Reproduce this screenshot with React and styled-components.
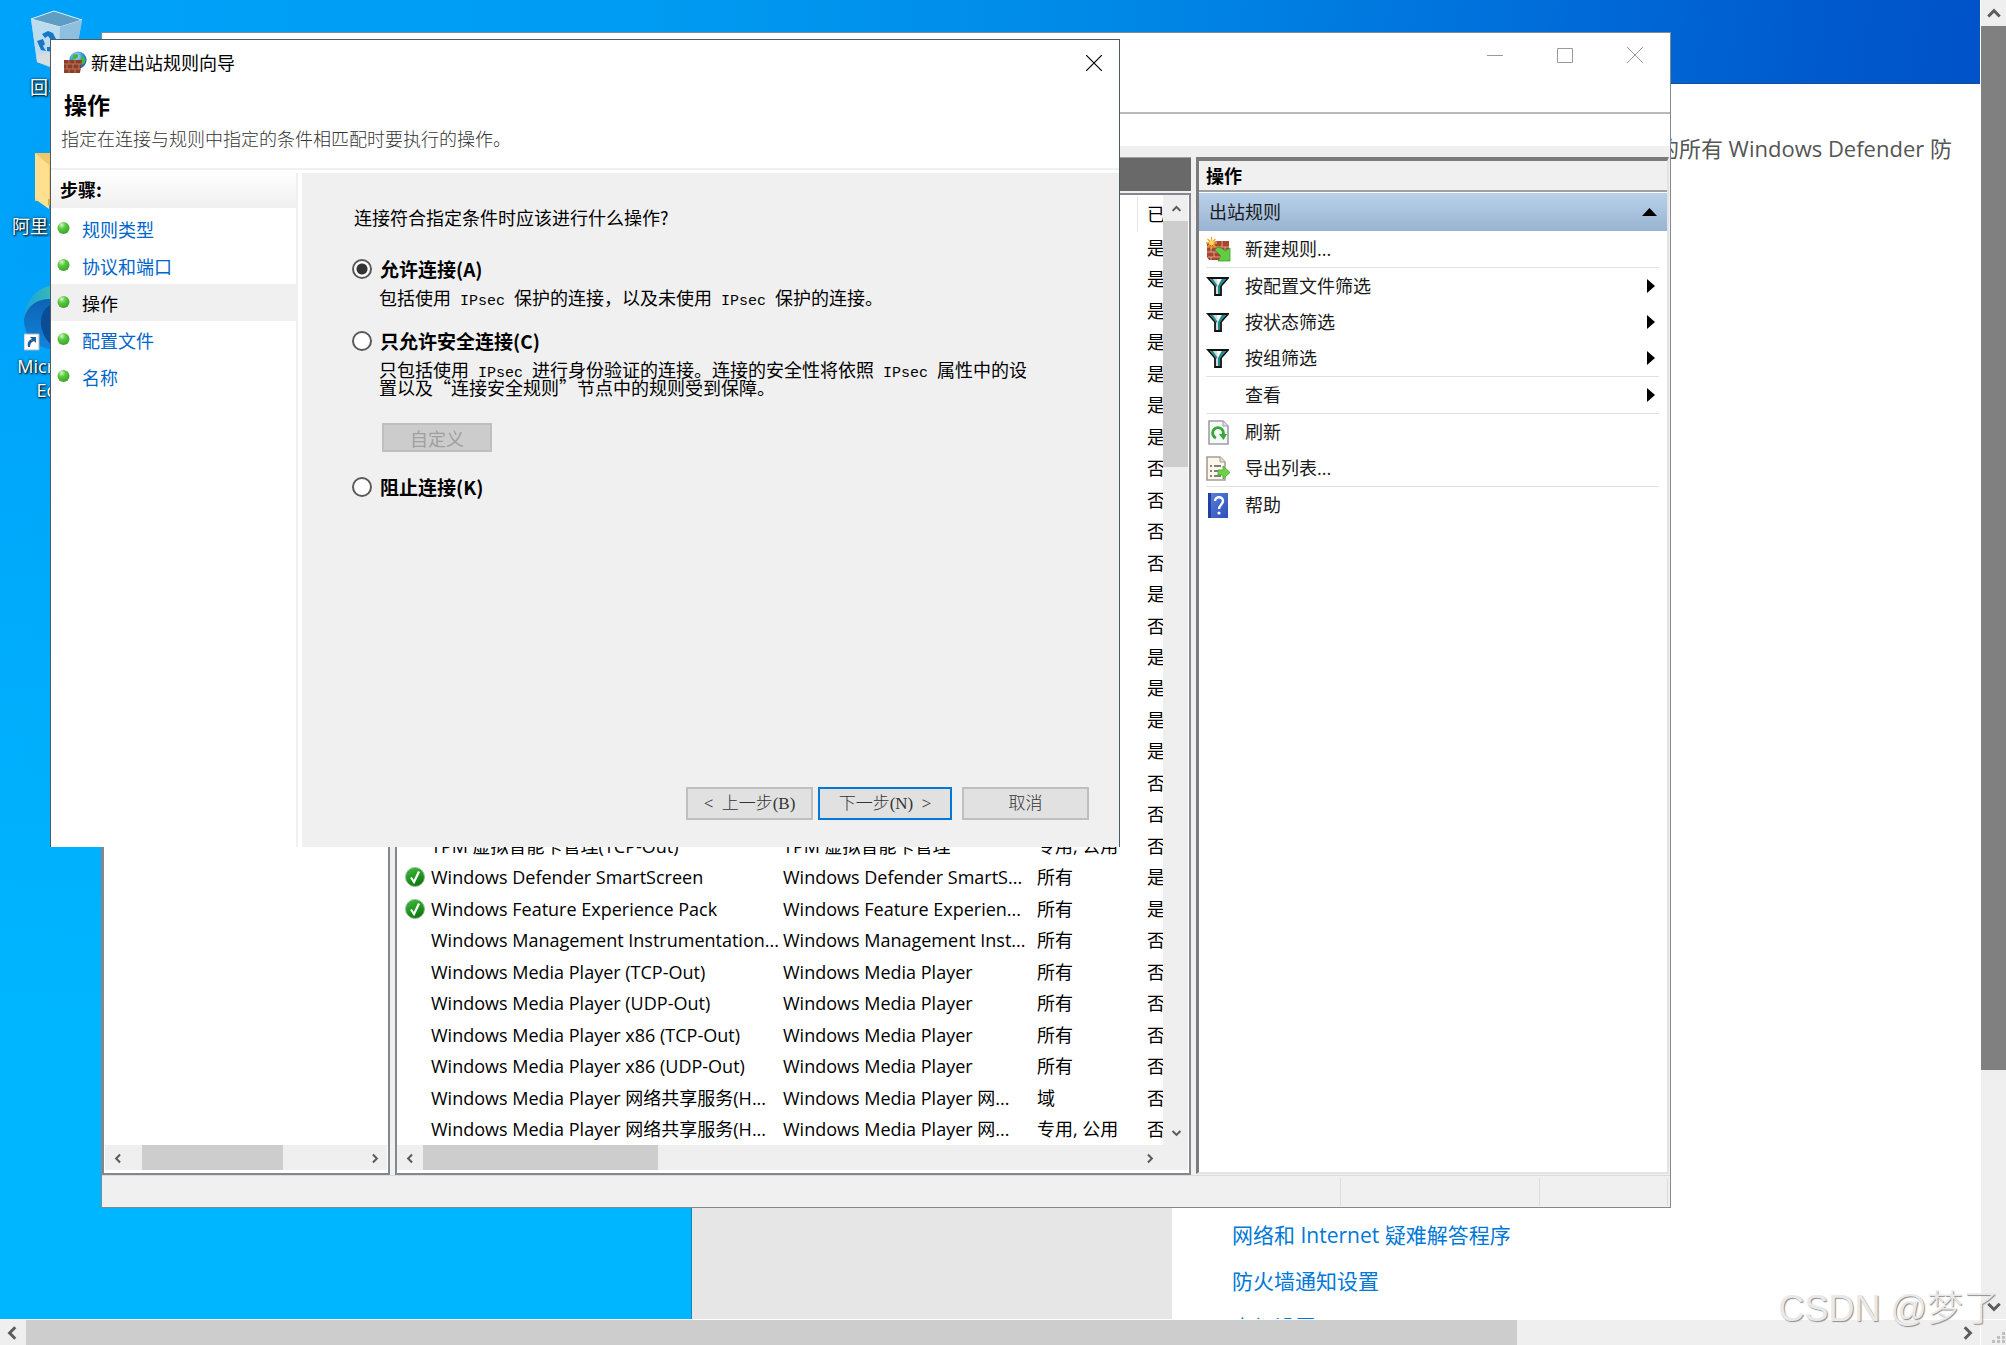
import { useState } from "react";
import styled, { createGlobalStyle, css } from "styled-components";

const uiFont = `"Open Sans", "Noto Sans CJK SC", sans-serif`;
const cjkFont = `"Noto Sans CJK SC", "Noto Sans", sans-serif`;

const GlobalStyle = createGlobalStyle`
  * { box-sizing: border-box; }
  body { margin: 0; overflow: hidden; font-family: ${uiFont}; font-size: 18px; line-height: 24px; color: #1a1a1a; }
  button { font: inherit; color: inherit; border: 0; padding: 0; background: none; }
  a { text-decoration: none; }
  h1, h2, p, ul { margin: 0; padding: 0; font-size: inherit; font-weight: inherit; }
  ul { list-style: none; }
  svg { display: block; flex: none; }
`;

const Screen = styled.div`
  position: relative;
  display: grid;
  grid-template: minmax(0, 1fr) 25px / minmax(0, 1fr) 25px;
  gap: 1px;
  height: 100vh;
  background: #ffffff;
`;

const Desktop = styled.main`
  position: relative;
  overflow: hidden;
  background:
    linear-gradient(180deg, rgba(0, 184, 255, 0) 0%, rgba(0, 184, 255, 0) 20%, #00b7ff 80%),
    linear-gradient(98deg, #00a3fa 0%, #009bf2 30%, #0088e6 52%, #0072dc 68%, #0058cc 86%, #004ac4 100%);
`;

/* ---------- scroll bars ---------- */

const Bar = styled.div`
  display: flex;
  flex-direction: ${(p) => (p.$vertical ? "column" : "row")};
  background: #efefef;
  ${(p) => (p.$vertical ? css`width: 25px;` : css`height: 25px;`)}
`;

const ArrowButton = styled.button`
  display: flex;
  align-items: center;
  justify-content: center;
  flex: none;
  width: 26px;
  height: 26px;
`;

const Track = styled.div`
  display: flex;
  flex: 1;
  min-width: 0;
  min-height: 0;
  flex-direction: ${(p) => (p.$vertical ? "column" : "row")};
  padding-left: ${(p) => p.$start || 0}px;
`;

const Thumb = styled.div`
  flex: 0 0 ${(p) => p.$size};
  background: ${(p) => (p.$dark ? "#808080" : "#cdcdcd")};
`;

const chevrons = {
  up: "M2 10 L7 5 L12 10",
  down: "M2 5 L7 10 L12 5",
  left: "M9 2 L4 7 L9 12",
  right: "M5 2 L10 7 L5 12",
};

const Chevron = ({ dir, size = 12 }) => (
  <svg width={size} height={size} viewBox="0 0 14 14">
    <path d={chevrons[dir]} fill="none" stroke="#5c5c5c" strokeWidth="2.6" />
  </svg>
);

const ScrollBar = ({ vertical, thumb, start, dark, icon }) => (
  <Bar $vertical={vertical}>
    <ArrowButton type="button" aria-label={vertical ? "向上" : "向左"}>
      <Chevron dir={vertical ? "up" : "left"} size={icon} />
    </ArrowButton>
    <Track $vertical={vertical} $start={start}>
      <Thumb $size={thumb} $dark={dark} />
    </Track>
    <ArrowButton type="button" aria-label={vertical ? "向下" : "向右"}>
      <Chevron dir={vertical ? "down" : "right"} size={icon} />
    </ArrowButton>
  </Bar>
);

const Grip = styled.div`
  display: flex;
  align-items: flex-end;
  justify-content: flex-end;
  background: #efefef;
`;

/* ---------- desktop shortcuts ---------- */

const Shortcut = styled.div`
  position: absolute;
  left: 0;
  top: ${(p) => p.$top}px;
  width: 114px;
  display: flex;
  flex-direction: column;
  align-items: center;
  gap: 3px;
  color: #ffffff;
  text-align: center;
  text-shadow: 1px 1px 2px #000000, 0 0 3px rgba(0, 0, 0, 0.7);
`;

const WideLabel = styled.span`
  align-self: flex-start;
  padding-left: 12px;
`;

const BinIcon = () => (
  <svg width="54" height="62" viewBox="0 0 54 62">
    <path d="M1 9 L24 1 L52 10 L44 55 L24 59 L7 52 Z" fill="#9fcbe6" />
    <path d="M1 9 L24 1 L52 10 L30 17 Z" fill="#5e9dc4" stroke="#d7edf8" strokeWidth="1" />
    <path d="M1 9 L30 17 L29 59 L7 52 Z" fill="#bddcf0" />
    <path d="M30 17 L52 10 L44 55 L29 59 Z" fill="#8fbfdf" />
    <path d="M7 45 L20 42 L29 48 L29 59 L7 52 Z" fill="#d9dde0" />
    <path d="M12 24 l6 -3 5 2 3 6 -5 1 -3 -4 -3 2z M7 31 l6 -2 2 5 -2 2 3 5 -5 -1z M17 41 v-4 l5 0 3 -4 2 4 -4 5z" fill="#1677c7" />
  </svg>
);

const FolderIcon = () => (
  <svg width="44" height="58" viewBox="0 0 44 58">
    <path d="M0 0 H30 L44 10 V48 H0 Z" fill="#f0c869" />
    <path d="M0 0 L14 12 V56 L0 46 Z" fill="#ffe08f" />
    <path d="M13 46 h14 v6 h-14z" fill="#e0ad3f" />
  </svg>
);

const EdgeIcon = () => (
  <svg width="66" height="66" viewBox="0 0 66 66">
    <defs>
      <linearGradient id="edgeTop" x1="0" y1="0" x2="1" y2="0">
        <stop offset="0" stopColor="#1ba2de" />
        <stop offset="1" stopColor="#5fd87a" />
      </linearGradient>
      <linearGradient id="edgeBody" x1="0" y1="0" x2="0" y2="1">
        <stop offset="0" stopColor="#0c63b4" />
        <stop offset="1" stopColor="#1285dc" />
      </linearGradient>
    </defs>
    <path d="M0 34 C2 10 18 0 34 0 C52 0 66 14 66 30 C66 20 30 4 0 34Z" fill="url(#edgeTop)" />
    <path d="M0 34 C4 18 16 14 26 14 C38 14 46 22 46 30 H34 C26 32 26 48 42 60 C30 70 0 62 0 34Z" fill="url(#edgeBody)" />
    <path d="M26 20 C12 28 14 54 34 64 L48 58 C34 54 26 42 30 30Z" fill="#0b4d95" />
    <path d="M0 49 h15 v16 h-15z" fill="#ffffff" stroke="#a9b8c4" />
    <path d="M4 62 C3 57 5 55 8 54 L6 52 H12 V58 L10 56 C7 57 6 59 6 62Z" fill="#1f5f9f" />
  </svg>
);

/* ---------- settings window ---------- */

const SettingsWindow = styled.section`
  position: absolute;
  inset: 83px 0 0 691px;
  display: grid;
  grid-template-columns: 480px 1fr;
  border-top: 1px solid #1b4f8c;
  border-left: 1px solid #1583bd;
  background: #ffffff;
  font-size: 21px;
  line-height: 30px;
`;

const SettingsNav = styled.div`
  background: #e6e6e6;
`;

const SettingsBody = styled.div`
  display: flex;
  flex-direction: column;
  justify-content: space-between;
  overflow: hidden;
  padding: 49px 28px 0 60px;
`;

const SettingsNote = styled.p`
  align-self: flex-end;
  color: #555555;
  font-size: 22px;
  white-space: nowrap;
`;

const SettingsLinks = styled.nav`
  display: flex;
  flex-direction: column;
  gap: 16px;
  margin-bottom: -23px;

  a { color: #0078d7; }
`;

/* ---------- console window ---------- */

const ConsoleWindow = styled.section`
  position: absolute;
  inset: 32px 309px 111px 101px;
  display: flex;
  flex-direction: column;
  border: 1px solid #7f8a92;
  background: #f0f0f0;
`;

const ConsoleTitle = styled.header`
  display: flex;
  justify-content: flex-end;
  align-items: flex-start;
  flex: none;
  height: 79px;
  background: #ffffff;
`;

const CaptionButton = styled.button`
  display: flex;
  align-items: center;
  justify-content: center;
  width: 70px;
  height: 44px;
`;

const ToolStrip = styled.div`
  flex: none;
  height: 34px;
  border-top: 2px solid #b9b9bd;
  background: #ffffff;
`;

const Panes = styled.div`
  display: grid;
  grid-template-columns: 288px minmax(0, 1fr) 473px;
  gap: 5px;
  flex: 1;
  min-height: 0;
  padding: 11px 1px 0 0;
`;

const TreePane = styled.div`
  display: flex;
  flex-direction: column;
  justify-content: flex-end;
  border: 2px solid #828790;
  background: #ffffff;
  padding: 0 1px 3px;
`;

const ListPane = styled.div`
  display: flex;
  flex-direction: column;
  min-height: 0;
`;

const ListCaption = styled.div`
  flex: none;
  height: 34px;
  margin-bottom: 2px;
  border-top: 1px solid #a0a0a0;
  background: #696969;
`;

const ListBox = styled.div`
  display: flex;
  flex-direction: column;
  flex: 1;
  min-height: 0;
  border: 2px solid #828790;
  background: #ffffff;
  padding: 0 1px 3px 0;
`;

const ListBody = styled.div`
  display: flex;
  flex: 1;
  min-height: 0;
`;

const BarRow = styled.div`
  display: flex;
  flex: none;
  background: #efefef;

  > :first-child { flex: 1; }
`;

const Corner = styled.div`
  width: 26px;
`;

const RuleTable = styled.table`
  display: flex;
  flex-direction: column;
  flex: 1;
  min-width: 0;
  overflow: hidden;
  color: #000000;

  thead { flex: none; padding-top: 1px; }
  tbody { flex: 1; display: grid; grid-auto-rows: 1fr; }
  tr { display: grid; grid-template-columns: 383px 250px 107px 1fr; }
  thead tr { height: 36px; }
`;

const Head = styled.th`
  display: flex;
  align-items: center;
  padding: 0 0 0 9px;
  border-left: 1px solid #e5e5e5;
  font-weight: 400;
  overflow: hidden;
`;

const Cell = styled.td`
  display: flex;
  align-items: center;
  gap: 6px;
  min-width: 0;
  padding: 0 0 0 ${(p) => p.$pad}px;
  white-space: nowrap;
  overflow: hidden;
`;

const IconSlot = styled.span`
  flex: none;
  width: 20px;
`;

const CheckIcon = () => (
  <svg width="20" height="20" viewBox="0 0 20 20">
    <defs>
      <linearGradient id="tick" x1="0" y1="0" x2="0.4" y2="1">
        <stop offset="0" stopColor="#3fbf3a" />
        <stop offset="1" stopColor="#0e7a12" />
      </linearGradient>
    </defs>
    <circle cx="10" cy="10" r="9.5" fill="url(#tick)" stroke="#9bb79b" />
    <path d="M6 10.5 L9 15 L14 4.5" fill="none" stroke="#ffffff" strokeWidth="2.2" />
  </svg>
);

const ActionsPane = styled.aside`
  display: flex;
  flex-direction: column;
  min-height: 0;
  border-top: 4px solid #7b7b7b;
  border-left: 3px solid #7b7b7b;
  border-right: 2px solid #e3e3e3;
  border-bottom: 2px solid #e3e3e3;
  margin-bottom: 1px;
  background: #ffffff;
`;

const ActionsHead = styled.h2`
  flex: none;
  height: 31px;
  padding: 3px 7px;
  border-bottom: 2px solid #a0a0a0;
  background: #f0f0f0;
  color: #000000;
  font-weight: 700;
`;

const GroupHead = styled.button`
  display: flex;
  align-items: center;
  justify-content: space-between;
  flex: none;
  height: 38px;
  margin-top: 1px;
  padding: 0 10px 0 10px;
  background: linear-gradient(#b9d1ea, #99b4d1);
`;

const ActionList = styled.ul`
  padding: 0 8px 0 7px;
`;

const ActionItem = styled.li`
  border-bottom: ${(p) => (p.$line ? "1px solid #e2e2e2" : "0")};

  button {
    display: flex;
    align-items: center;
    width: 100%;
    height: 36px;
    padding-right: 4px;
    text-align: left;
  }

  span { flex: 1; }
`;

const ActionIcon = styled.i`
  flex: none;
  width: 39px;
`;

const StatusBar = styled.footer`
  display: flex;
  justify-content: flex-end;
  flex: none;
  height: 32px;
  padding: 2px 2px 1px 0;
  border-top: 1px solid #dcdcdc;
`;

const StatusCell = styled.div`
  width: ${(p) => p.$width}px;
  border-left: 1px solid #dcdcdc;
`;

const NewRuleIcon = () => (
  <svg width="25" height="25" viewBox="0 0 25 25">
    <path d="M1 6 L12 4 H23 V20 L20 23 H3 L1 20Z" fill="#a8452f" />
    <path d="M1 10 H23 M1 15 H23 M2 20 H22 M8 5 V10 M16 4 V10 M5 10 V15 M12 10 V15 M19 10 V15 M8 15 V20 M15 15 V20 M5 20 V23" stroke="#dba58d" strokeWidth="1" />
    <path d="M9 13 C11 9 15 10 19 14 L24 11 V24 H12 L15 19 Z" fill="#62cc42" stroke="#3d9c2c" strokeWidth="0.8" />
    <path d="M5.5 0 V12 M0 6 H11 M1.5 2 L9.5 10 M9.5 2 L1.5 10" stroke="#f6a31c" strokeWidth="1.3" />
    <circle cx="5.5" cy="6" r="2.4" fill="#ffd75a" />
  </svg>
);

const FunnelIcon = () => (
  <svg width="23" height="19" viewBox="0 0 23 19">
    <path d="M2 1 H22 L15 9 V18 H9 V9 Z" fill="#d6dadb" stroke="#111111" strokeWidth="1.8" />
    <path d="M16 2 H20 L14 9 V17 H12 V9Z" fill="#158c8c" />
    <path d="M4 2 H7 L11 8 V10Z" fill="#158c8c" />
    <path d="M11 2 H15 L12 8Z" fill="#ffffff" />
  </svg>
);

const RefreshIcon = () => (
  <svg width="23" height="25" viewBox="0 0 23 25">
    <path d="M3 1 H17 L22 6 V24 H3Z" fill="#f7f8f8" stroke="#9aa0a3" strokeWidth="1.6" />
    <path d="M17 1 V6 H22" fill="#dddddd" stroke="#9aa0a3" />
    <path d="M10 18 A5.4 5.4 0 1 1 17 15" fill="none" stroke="#35a935" strokeWidth="2.8" />
    <path d="M13 14 H21 L17.5 20Z" fill="#35a935" />
  </svg>
);

const ExportIcon = () => (
  <svg width="25" height="25" viewBox="0 0 25 25">
    <path d="M1 1 H14 L19 6 V24 H1Z" fill="#fbf7ea" stroke="#a39f92" strokeWidth="1.6" />
    <path d="M14 1 V6 H19" fill="#e4dfd0" stroke="#a39f92" />
    <path d="M4 10 H6 M4 15 H6 M4 20 H6 M8 10 H15 M8 15 H13 M8 20 H15" stroke="#55595c" strokeWidth="1.4" />
    <path d="M12 14 H17 V10 L24 16.5 L17 23 V19 H12Z" fill="#6fd04a" stroke="#49a52e" strokeWidth="0.8" />
  </svg>
);

const HelpIcon = () => (
  <svg width="22" height="25" viewBox="0 0 22 25">
    <defs>
      <linearGradient id="book" x1="0" y1="0" x2="1" y2="1">
        <stop offset="0" stopColor="#5b82e0" />
        <stop offset="1" stopColor="#2c4fb8" />
      </linearGradient>
    </defs>
    <path d="M2 0 H22 V25 H2Z" fill="url(#book)" />
    <path d="M2 0 H5 V25 H2Z" fill="#2140a0" />
    <path d="M9 8 C9 3 17 3 17 8 C17 11.5 13 12 13 16" fill="none" stroke="#ffffff" strokeWidth="2.4" />
    <circle cx="13" cy="20" r="1.6" fill="#ffffff" />
  </svg>
);

const RightTriangle = () => (
  <svg width="8" height="14" viewBox="0 0 8 14">
    <path d="M0 0 L8 7 L0 14Z" fill="#000000" />
  </svg>
);

/* ---------- wizard ---------- */

const Wizard = styled.form`
  position: absolute;
  left: 50px;
  top: 39px;
  width: 1070px;
  height: 808px;
  display: flex;
  flex-direction: column;
  border: 1px solid #4d5a63;
  border-bottom: 0;
  background: #ffffff;
  color: #000000;
  font-family: ${cjkFont};
`;

const WizardTitle = styled.header`
  display: flex;
  align-items: center;
  flex: none;
  height: 44px;
  padding-left: 13px;
  gap: 4px;

  h1 { flex: 1; }
`;

const CloseButton = styled.button`
  display: flex;
  align-items: center;
  justify-content: center;
  width: 50px;
  height: 44px;
  padding-top: 2px;
`;

const WizardIntro = styled.div`
  flex: none;
  height: 86px;
  padding: 6px 10px 0;
  border-bottom: 2px solid #f0f0f0;

  h2 {
    padding-left: 3px;
    font-size: 23px;
    line-height: 28px;
    font-weight: 700;
  }

  p {
    margin-top: 8px;
    color: #333333;
    font-weight: 300;
  }
`;

const WizardBody = styled.div`
  display: grid;
  grid-template-columns: 247px 1fr;
  gap: 4px;
  flex: 1;
  min-height: 0;
  padding-top: 3px;
`;

const Steps = styled.nav`
  border-right: 2px solid #f0f0f0;
`;

const StepsHead = styled.h2`
  height: 35px;
  margin-bottom: 2px;
  padding: 4px 9px;
  background: linear-gradient(#ffffff, #efefef);
  font-weight: 700;
`;

const Step = styled.a`
  display: flex;
  align-items: center;
  gap: 12px;
  height: 37px;
  padding-left: 6px;
  background: ${(p) => (p.$current ? "#f0f0f0" : "transparent")};
  color: ${(p) => (p.$current ? "#000000" : "#0066cc")};
`;

const StepDot = () => (
  <svg width="13" height="13" viewBox="0 0 13 13">
    <defs>
      <radialGradient id="dot" cx="0.35" cy="0.25" r="0.8">
        <stop offset="0" stopColor="#d9f5cf" />
        <stop offset="0.4" stopColor="#57cd3c" />
        <stop offset="1" stopColor="#3f9c33" />
      </radialGradient>
    </defs>
    <circle cx="6.5" cy="6" r="6" fill="url(#dot)" />
  </svg>
);

const Question = styled.div`
  display: flex;
  flex-direction: column;
  gap: 23px;
  background: #f0f0f0;
  padding: 32px 30px 27px 50px;
`;

const Prompt = styled.p`
  padding: 0 0 5px 2px;
`;

const Option = styled.div``;

const OptionLabel = styled.label`
  display: flex;
  align-items: center;
  gap: 8px;
  font-size: 19px;
  font-weight: 700;
`;

const Radio = styled.input`
  appearance: none;
  flex: none;
  width: 20px;
  height: 20px;
  margin: 0;
  border: 2px solid #5a5a5a;
  border-radius: 50%;
  background: #ffffff;

  &:checked {
    background: radial-gradient(circle, #333333 5px, #ffffff 6px);
  }
`;

const Detail = styled.p`
  max-width: 652px;
  margin: 7px 0 0 27px;
  line-height: 18px;
`;

const Half = styled.span`
  font-family: "Liberation Mono", monospace;
  font-size: 15px;
  line-height: 0;
`;

const CustomButton = styled.button`
  width: 110px;
  height: 29px;
  margin: 27px 0 0 30px;
  border: 2px solid #bfbfbf;
  background: #cccccc;
  color: #a0a0a0;
  line-height: 22px;
  display: block;
`;

const WizardButtons = styled.div`
  display: flex;
  justify-content: flex-end;
  gap: 5px;
  margin-top: auto;
`;

const WizardButton = styled.button`
  width: ${(p) => (p.$primary ? 134 : 127)}px;
  height: 33px;
  margin-left: ${(p) => (p.$apart ? 5 : 0)}px;
  border: 2px solid ${(p) => (p.$primary ? "#0078d7" : "#bfbfbf")};
  background: #e1e1e1;
  color: #333333;
  font-family: "Liberation Serif", ${cjkFont};
  font-size: 17px;
  font-weight: 300;
  white-space: pre;
`;

const FirewallIcon = () => (
  <svg width="23" height="23" viewBox="0 0 23 23">
    <defs>
      <radialGradient id="globe" cx="0.4" cy="0.3" r="0.8">
        <stop offset="0" stopColor="#bfe6ff" />
        <stop offset="0.5" stopColor="#2f8fe0" />
        <stop offset="1" stopColor="#174fa8" />
      </radialGradient>
    </defs>
    <circle cx="14" cy="9" r="8.6" fill="url(#globe)" />
    <path d="M9 4 C12 2 15 3 14 6 C12 9 10 8 8 9Z M17 4 L21 7 L21 12 L17 14 C15 11 18 8 17 4Z" fill="#48b53a" />
    <path d="M0 9 H18 L16 22 H0Z" fill="#8d3d28" />
    <path d="M0 13 H17 M0 18 H17 M5 9 V13 M11 9 V13 M3 13 V18 M9 13 V18 M15 13 V18 M5 18 V22 M11 18 V22" stroke="#b8765e" strokeWidth="1" />
  </svg>
);

const Watermark = styled.div`
  position: absolute;
  right: 7px;
  bottom: 12px;
  color: #e9e9e9;
  font-family: "Liberation Sans", "Noto Sans CJK SC", sans-serif;
  font-size: 36px;
  font-weight: 300;
  line-height: 48px;
  text-shadow: 1px 1px 1px #8c8c8c;
  pointer-events: none;
`;

const enabled = "是是是是是是是否否否否是否是是是是否否否是是否否否否否否否".split("");

const named = {
  19: ["TPM 虚拟智能卡管理(TCP-Out)", "TPM 虚拟智能卡管理", "专用, 公用"],
  20: ["Windows Defender SmartScreen", "Windows Defender SmartS...", "所有"],
  21: ["Windows Feature Experience Pack", "Windows Feature Experien...", "所有"],
  22: ["Windows Management Instrumentation...", "Windows Management Inst...", "所有"],
  23: ["Windows Media Player (TCP-Out)", "Windows Media Player", "所有"],
  24: ["Windows Media Player (UDP-Out)", "Windows Media Player", "所有"],
  25: ["Windows Media Player x86 (TCP-Out)", "Windows Media Player", "所有"],
  26: ["Windows Media Player x86 (UDP-Out)", "Windows Media Player", "所有"],
  27: ["Windows Media Player 网络共享服务(H...", "Windows Media Player 网...", "域"],
  28: ["Windows Media Player 网络共享服务(H...", "Windows Media Player 网...", "专用, 公用"],
};

const rules = enabled.map((on, i) => {
  const [name = "", group = "", profile = ""] = named[i] || [];
  return { name, group, profile, on, ticked: Boolean(name) && on === "是" };
});

const actions = [
  { label: "新建规则...", icon: <NewRuleIcon />, line: true },
  { label: "按配置文件筛选", icon: <FunnelIcon />, sub: true },
  { label: "按状态筛选", icon: <FunnelIcon />, sub: true },
  { label: "按组筛选", icon: <FunnelIcon />, sub: true, line: true },
  { label: "查看", sub: true, line: true },
  { label: "刷新", icon: <RefreshIcon /> },
  { label: "导出列表...", icon: <ExportIcon />, line: true },
  { label: "帮助", icon: <HelpIcon /> },
];

const steps = ["规则类型", "协议和端口", "操作", "配置文件", "名称"];

const RulesConsole = () => (
  <ConsoleWindow>
    <ConsoleTitle>
      <CaptionButton type="button" aria-label="最小化">
        <svg width="16" height="16" viewBox="0 0 16 16"><path d="M0 8.5 H16" stroke="#999999" /></svg>
      </CaptionButton>
      <CaptionButton type="button" aria-label="最大化">
        <svg width="16" height="16" viewBox="0 0 16 16"><path d="M0.5 1.5 H15.5 V15.5 H0.5Z" fill="none" stroke="#999999" /></svg>
      </CaptionButton>
      <CaptionButton type="button" aria-label="关闭">
        <svg width="16" height="16" viewBox="0 0 16 16"><path d="M0 0 L16 16 M16 0 L0 16" stroke="#999999" /></svg>
      </CaptionButton>
    </ConsoleTitle>
    <ToolStrip />
    <Panes>
      <TreePane>
        <ScrollBar thumb="141px" start={11} icon={11} />
      </TreePane>
      <ListPane>
        <ListCaption />
        <ListBox>
          <ListBody>
            <RuleTable>
              <thead>
                <tr>
                  <td /><td /><td />
                  <Head>已</Head>
                </tr>
              </thead>
              <tbody>
                {rules.map((r, i) => (
                  <tr key={i}>
                    <Cell $pad={8}>
                      <IconSlot>{r.ticked && <CheckIcon />}</IconSlot>
                      {r.name}
                    </Cell>
                    <Cell $pad={3}>{r.group}</Cell>
                    <Cell $pad={7}>{r.profile}</Cell>
                    <Cell $pad={10}>{r.on}</Cell>
                  </tr>
                ))}
              </tbody>
            </RuleTable>
            <ScrollBar vertical thumb="246px" icon={11} />
          </ListBody>
          <BarRow>
            <ScrollBar thumb="33%" icon={11} />
            <Corner />
          </BarRow>
        </ListBox>
      </ListPane>
      <ActionsPane>
        <ActionsHead>操作</ActionsHead>
        <GroupHead type="button">
          出站规则
          <svg width="15" height="8" viewBox="0 0 15 8"><path d="M0 8 L7.5 0 L15 8Z" fill="#000000" /></svg>
        </GroupHead>
        <ActionList>
          {actions.map((a) => (
            <ActionItem key={a.label} $line={a.line}>
              <button type="button">
                <ActionIcon>{a.icon}</ActionIcon>
                <span>{a.label}</span>
                {a.sub && <RightTriangle />}
              </button>
            </ActionItem>
          ))}
        </ActionList>
      </ActionsPane>
    </Panes>
    <StatusBar>
      <StatusCell $width={199} />
      <StatusCell $width={128} />
      <StatusCell $width={1} />
    </StatusBar>
  </ConsoleWindow>
);

const RuleWizard = () => {
  const [choice, setChoice] = useState("allow");

  const radio = (value) => (
    <Radio
      type="radio"
      name="action"
      id={value}
      checked={choice === value}
      onChange={() => setChoice(value)}
    />
  );

  return (
    <Wizard onSubmit={(e) => e.preventDefault()}>
      <WizardTitle>
        <FirewallIcon />
        <h1>新建出站规则向导</h1>
        <CloseButton type="button" aria-label="关闭">
          <svg width="16" height="16" viewBox="0 0 16 16"><path d="M0 0 L16 16 M16 0 L0 16" stroke="#000000" strokeWidth="1.2" /></svg>
        </CloseButton>
      </WizardTitle>
      <WizardIntro>
        <h2>操作</h2>
        <p>指定在连接与规则中指定的条件相匹配时要执行的操作。</p>
      </WizardIntro>
      <WizardBody>
        <Steps>
          <StepsHead>步骤:</StepsHead>
          {steps.map((s) => (
            <Step key={s} href="#" $current={s === "操作"}>
              <StepDot />
              {s}
            </Step>
          ))}
        </Steps>
        <Question>
          <Prompt>连接符合指定条件时应该进行什么操作?</Prompt>
          <Option>
            <OptionLabel htmlFor="allow">{radio("allow")}允许连接(A)</OptionLabel>
            <Detail>
              包括使用<Half> IPsec </Half>保护的连接，以及未使用<Half> IPsec </Half>保护的连接。
            </Detail>
          </Option>
          <Option>
            <OptionLabel htmlFor="secure">{radio("secure")}只允许安全连接(C)</OptionLabel>
            <Detail>
              只包括使用<Half> IPsec </Half>进行身份验证的连接。连接的安全性将依照<Half> IPsec </Half>属性中的设置以及“连接安全规则”节点中的规则受到保障。
            </Detail>
            <CustomButton type="button" disabled>自定义</CustomButton>
          </Option>
          <Option>
            <OptionLabel htmlFor="block">{radio("block")}阻止连接(K)</OptionLabel>
          </Option>
          <WizardButtons>
            <WizardButton type="button">{"<  上一步(B)"}</WizardButton>
            <WizardButton type="submit" $primary>{"下一步(N)  >"}</WizardButton>
            <WizardButton type="button" $apart>取消</WizardButton>
          </WizardButtons>
        </Question>
      </WizardBody>
    </Wizard>
  );
};

const App = () => {
  return (
    <>
      <GlobalStyle />
      <Screen>
        <Desktop>
          <Shortcut $top={10}>
            <BinIcon />
            回收站
          </Shortcut>
          <Shortcut $top={153}>
            <FolderIcon />
            <WideLabel>阿里云</WideLabel>
          </Shortcut>
          <Shortcut $top={285}>
            <EdgeIcon />
            <span>Microsoft<br />Edge</span>
          </Shortcut>
          <SettingsWindow>
            <SettingsNav />
            <SettingsBody>
              <SettingsNote>的所有 Windows Defender 防</SettingsNote>
              <SettingsLinks>
                <a href="#">网络和 Internet 疑难解答程序</a>
                <a href="#">防火墙通知设置</a>
                <a href="#">高级设置</a>
              </SettingsLinks>
            </SettingsBody>
          </SettingsWindow>
          <RulesConsole />
          <RuleWizard />
        </Desktop>
        <ScrollBar vertical dark thumb="1044px" icon={16} />
        <ScrollBar thumb="1491px" icon={16} />
        <Grip>
          <svg width="14" height="14" viewBox="0 0 14 14">
            <path d="M10 1h3v3h-3z M10 5h3v3h-3z M10 9h3v3h-3z M5 5h3v3h-3z M5 9h3v3h-3z M0 9h3v3h-3z" fill="#bfbfbf" />
          </svg>
        </Grip>
        <Watermark>CSDN @梦了</Watermark>
      </Screen>
    </>
  );
};

export default App;
